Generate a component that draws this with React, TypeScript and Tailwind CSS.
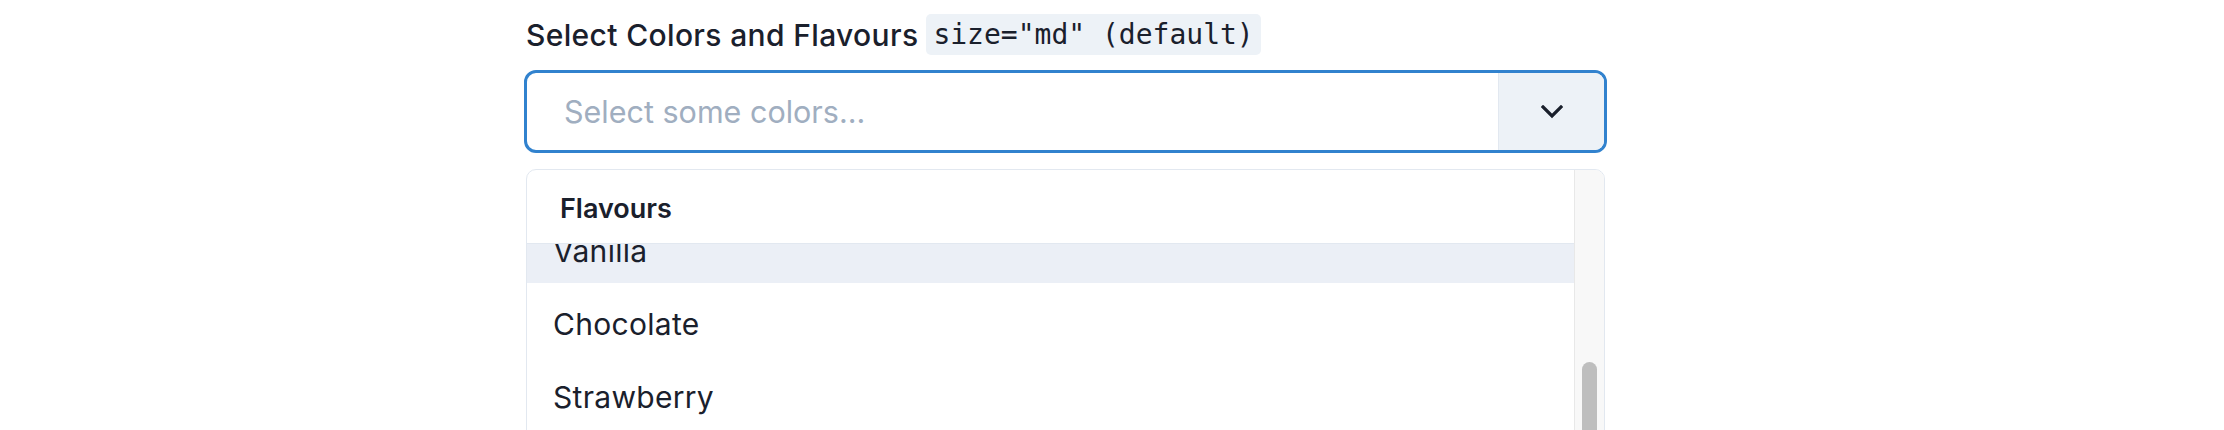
const flavours = ['Vanilla', 'Chocolate', 'Strawberry'];

function Chevron() {
  return (
    <svg width="22" height="14" viewBox="0 0 22 14" fill="none">
      <polyline points="2,2 11,11 20,2" stroke="#1A202C" strokeWidth="3.2" strokeLinecap="square" />
    </svg>
  );
}

export default function App() {
  return (
    <div className="h-[430px] w-[2224px] overflow-hidden bg-white font-['Inter',sans-serif] text-[#1A202C]">
      <div className="ml-[524px] w-[1083px] pt-[14px]">
        {/* label */}
        <div className="flex h-[41px] items-center">
          <span className="pl-[2px] pr-[8px] text-[30px] font-medium leading-none tracking-[0.35px]">Select Colors and Flavours</span>
          <code className="flex h-[41px] items-center rounded-[5px] bg-[#EDF2F7] px-[7px] font-['DejaVu_Sans_Mono',monospace] text-[28px]">
            size="md" (default)
          </code>
        </div>

        {/* control */}
        <div className="mt-[15px] flex h-[83px] overflow-hidden rounded-[12px] border-[3px] border-[#3182CE]">
          <div className="flex flex-1 items-center pl-[37px] text-[30.5px] text-[#A0AEC0]">Select some colors...</div>
          <div className="flex w-[106px] items-center justify-center border-l border-[#E2E8F0] bg-[#EDF2F7]">
            <Chevron />
          </div>
        </div>

        {/* menu */}
        <div className="mx-[2px] mt-[16px] flex h-[300px] overflow-hidden rounded-t-[10px] border border-[#E2E8F0]">
          <div className="flex flex-1 flex-col">
            <div className="h-[74px] border-b border-[#E2E8F0] pl-[33px] pt-[22px] text-[27px] font-semibold leading-[33px]">
              Flavours
            </div>
            <div className="flex-1 overflow-hidden">
              <div className="-mt-[34px]">
                {flavours.map((f, i) => (
                  <div
                    key={f}
                    className={`h-[73px] pl-[26px] pt-[23px] text-[30px] leading-[36px] tracking-[0.3px] ${i === 0 ? 'bg-[#EBEFF6]' : ''}`}
                  >
                    {f}
                  </div>
                ))}
              </div>
            </div>
          </div>
          <div className="w-[30px] border-l border-[#E8E8E8] bg-[#F8F8F8] px-[7px] pt-[192px]">
            <div className="h-[120px] rounded-full bg-[#BEBEBE]" />
          </div>
        </div>
      </div>
    </div>
  );
}
